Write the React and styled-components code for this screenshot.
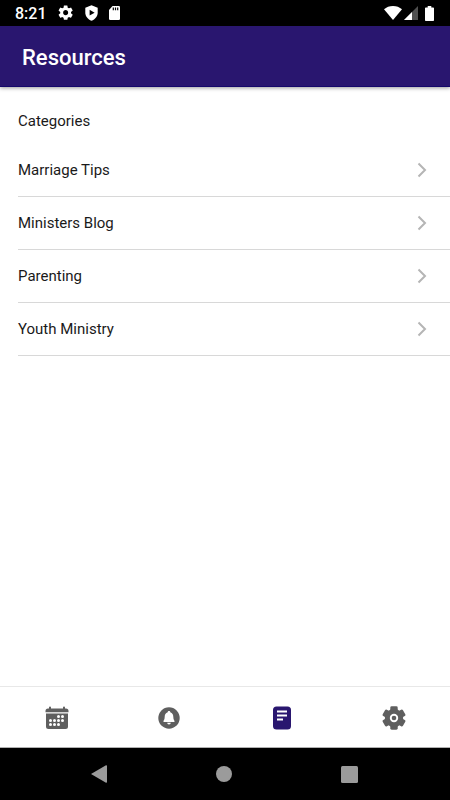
import React from "react";

import styled, { createGlobalStyle } from "styled-components";

const GlobalStyle = createGlobalStyle`
  * {
    box-sizing: border-box;
  }
  body {
    margin: 0;
    background: #ffffff;
    font-family: Roboto, "Liberation Sans", sans-serif;
  }
`;

const StyledScreen = styled.div`
  display: flex;
  flex-direction: column;
  min-height: 100vh;
`;

const StyledStatusBar = styled.div`
  display: flex;
  align-items: center;
  justify-content: space-between;
  height: 26px;
  padding: 0 16px 0 15px;
  background: #000000;
  color: #ffffff;
`;

const StyledStatusGroup = styled.div`
  display: flex;
  align-items: center;
  gap: ${(props) => props.$gap};

  svg {
    display: block;
  }
`;

const StyledClock = styled.span`
  padding-top: 2px;
  font-size: 16px;
  font-weight: 500;
  line-height: 24px;
`;

const StyledHeader = styled.header`
  display: flex;
  align-items: center;
  height: 61px;
  padding: 2px 22px 0;
  background: #29166f;
  border-bottom: 1px solid #15086b;
  box-shadow: 0 1px 4px rgba(0, 0, 0, 0.4);
`;

const StyledTitle = styled.h1`
  margin: 0;
  font-size: 22px;
  font-weight: 500;
  color: #ffffff;
`;

const StyledContent = styled.main`
  flex: 1;
  padding-left: 18px;
`;

const StyledSectionTitle = styled.h2`
  margin: 0;
  padding-top: 24px;
  font-size: 15px;
  font-weight: 400;
  line-height: 20px;
  color: #1a1a1a;
`;

const StyledList = styled.ul`
  margin: 13px 0 0;
  padding: 0;
  list-style: none;
`;

const StyledRow = styled.a`
  display: flex;
  align-items: center;
  justify-content: space-between;
  height: 53px;
  padding-right: 23px;
  border-bottom: 1px solid #d8d8d8;
  font-size: 15px;
  line-height: 20px;
  color: #1a1a1a;
  text-decoration: none;
`;

const StyledTabBar = styled.nav`
  display: flex;
  height: 62px;
  padding: 1px 0 0 1px;
  border-top: 1px solid #e8e8e8;
  border-bottom: 1px solid #b0b0b0;
`;

const StyledTab = styled.button`
  display: flex;
  flex: 1;
  align-items: center;
  justify-content: center;
  padding: 0;
  border: 0;
  background: none;
  color: ${(props) => (props.$active ? "#29166f" : "#5f5f5f")};
`;

const StyledSystemBar = styled.div`
  display: flex;
  height: 52px;
  padding: 0 38px 0 36px;
  background: #000000;
`;

const StyledSystemButton = styled.button`
  display: flex;
  flex: 1;
  align-items: center;
  justify-content: center;
  padding: 0;
  border: 0;
  background: none;
  color: #9b9b9b;
`;

const StatusGearIcon = () => (
  <svg width="18" height="18" viewBox="0 0 25 25" fill="currentColor">
    <path d="M19.43 12.98c.04-.32.07-.64.07-.98s-.03-.66-.07-.98l2.11-1.65c.19-.15.24-.42.12-.64l-2-3.46c-.12-.22-.39-.3-.61-.22l-2.49 1c-.52-.4-1.08-.73-1.69-.98l-.38-2.65A.488.488 0 0 0 14 2h-4c-.25 0-.46.18-.49.42l-.38 2.65c-.61.25-1.17.59-1.69.98l-2.49-1c-.23-.09-.49 0-.61.22l-2 3.46c-.13.22-.07.49.12.64l2.11 1.65c-.04.32-.07.65-.07.98s.03.66.07.98l-2.11 1.65c-.19.15-.24.42-.12.64l2 3.46c.12.22.39.3.61.22l2.49-1c.52.4 1.08.73 1.69.98l.38 2.65c.03.24.24.42.49.42h4c.25 0 .46-.18.49-.42l.38-2.65c.61-.25 1.17-.59 1.69-.98l2.49 1c.23.09.49 0 .61-.22l2-3.46c.12-.22.07-.49-.12-.64l-2.11-1.65zM12 15.5c-1.93 0-3.5-1.57-3.5-3.5s1.57-3.5 3.5-3.5 3.5 1.57 3.5 3.5-1.57 3.5-3.5 3.5z" />
  </svg>
);

const ShieldIcon = () => (
  <svg width="13" height="16" viewBox="0 0 13 16">
    <path
      d="M6.500.3 12.700 2.800V7.500C12.700 11.300 10.100 14.400 6.500 15.700 2.900 14.400.3 11.300.3 7.500V2.800Z"
      fill="currentColor"
    />
    <path d="M4.600 4.800 9.600 7.700 4.600 10.600Z" fill="#000000" />
  </svg>
);

const SdCardIcon = () => (
  <svg width="12" height="14" viewBox="0 0 12 14">
    <path
      d="M4.500 0H10.800A1.200 1.200 0 0 1 12 1.200V12.800A1.200 1.200 0 0 1 10.800 14H2.200A1.200 1.200 0 0 1 1 12.800V4Z"
      fill="currentColor"
    />
    <path d="M5.300 1.500V4.300M7.500 1.500V4.300M9.700 1.500V4.300" stroke="#000000" strokeWidth="1.200" />
  </svg>
);

const WifiIcon = () => (
  <svg width="18" height="14" viewBox="0 0 18 14">
    <path d="M0 3.300C2.400 1.200 5.500 0 9 0S15.600 1.200 18 3.300L9 14Z" fill="currentColor" />
  </svg>
);

const SignalIcon = () => (
  <svg width="14" height="14" viewBox="0 0 14 14">
    <path d="M14 0V14H0Z" fill="#505050" />
    <path d="M8 6V14H0Z" fill="currentColor" />
  </svg>
);

const BatteryIcon = () => (
  <svg width="9" height="15" viewBox="0 0 9 15">
    <path
      d="M2.700 0H6.300V1.500H8.200Q9 1.500 9 2.300V14.200Q9 15 8.200 15H.8Q0 15 0 14.200V2.300Q0 1.500.8 1.500H2.700Z"
      fill="currentColor"
    />
  </svg>
);

const ChevronIcon = () => (
  <svg width="10" height="16" viewBox="0 0 10 16" fill="none">
    <path d="M1.500 1.500 8 8 1.500 14.500" stroke="#b5b5b5" strokeWidth="2" />
  </svg>
);

const CALENDAR_DOTS = [
  [13.5, 10.5],
  [17.5, 10.5],
  [5.5, 14.5],
  [9.5, 14.5],
  [13.5, 14.5],
  [17.5, 14.5],
  [5.5, 18.5],
  [9.5, 18.5],
  [13.5, 18.5],
];

const CalendarIcon = () => (
  <svg width="24" height="24" viewBox="0 0 24 24">
    <path
      d="M3 2.500H4V1.500A1 1 0 0 1 6 1.500V2.500H18V1.500A1 1 0 0 1 20 1.500V2.500H21A2.500 2.500 0 0 1 23.500 5V6.300H.5V5A2.500 2.500 0 0 1 3 2.500Z"
      fill="currentColor"
    />
    <path d="M1 7.500H23V20.500A2.500 2.500 0 0 1 20.500 23H3.500A2.500 2.500 0 0 1 1 20.500Z" fill="currentColor" />
    {CALENDAR_DOTS.map(([x, y]) => (
      <circle key={`${x}-${y}`} cx={x} cy={y} r="1.500" fill="#ffffff" />
    ))}
  </svg>
);

const BellIcon = () => (
  <svg width="22" height="22" viewBox="0 0 22 22">
    <circle cx="11" cy="11" r="10.700" fill="currentColor" />
    <path
      d="M11 4C11.800 4 12.300 4.500 12.300 5.200 14.400 5.800 15.300 7.600 15.300 9.700 15.300 12.500 16.300 13.100 16.600 14.200Q16.700 15 16 15H6Q5.300 15 5.400 14.200C5.700 13.100 6.700 12.500 6.700 9.700 6.700 7.600 7.600 5.800 9.700 5.200 9.700 4.500 10.200 4 11 4ZM9.200 15.800H12.800A1.800 1.600 0 0 1 9.200 15.800Z"
      fill="#ffffff"
    />
  </svg>
);

const DocumentIcon = () => (
  <svg width="18" height="24" viewBox="0 0 18 24">
    <rect y="0.500" width="18" height="23" rx="3.500" fill="currentColor" />
    <path d="M4 5.500H14M4 9.500H14M4 13.500H10" stroke="#ffffff" strokeWidth="1.800" />
  </svg>
);

const SettingsIcon = () => (
  <svg width="24" height="24" viewBox="0 0 24 24" fill="currentColor">
    {[0, 60, 120].map((angle) => (
      <rect
        key={angle}
        x="8.300"
        y="0.300"
        width="7.400"
        height="23.400"
        rx="1.400"
        transform={`rotate(${angle} 12 12)`}
      />
    ))}
    <circle cx="12" cy="12" r="9.200" />
    <circle cx="12" cy="12" r="4.200" fill="#ffffff" />
    <circle cx="12" cy="12" r="2.300" />
  </svg>
);

const BackIcon = () => (
  <svg width="16" height="18" viewBox="0 0 16 18" fill="currentColor">
    <path d="M0 9 15 .2Q16 0 16 1V17Q16 18 15 17.800Z" />
  </svg>
);

const HomeIcon = () => (
  <svg width="16" height="16" viewBox="0 0 16 16" fill="currentColor">
    <circle cx="8" cy="8" r="8" />
  </svg>
);

const OverviewIcon = () => (
  <svg width="17" height="17" viewBox="0 0 17 17" fill="currentColor">
    <rect width="17" height="17" rx="1.500" />
  </svg>
);

const categories = ["Marriage Tips", "Ministers Blog", "Parenting", "Youth Ministry"];

const tabs = [
  { name: "Calendar", Icon: CalendarIcon },
  { name: "Notifications", Icon: BellIcon },
  { name: "Resources", Icon: DocumentIcon },
  { name: "Settings", Icon: SettingsIcon },
];

const systemButtons = [
  { name: "Back", Icon: BackIcon },
  { name: "Home", Icon: HomeIcon },
  { name: "Overview", Icon: OverviewIcon },
];

const App = () => {
  return (
    <StyledScreen>
      <GlobalStyle />
      <StyledStatusBar>
        <StyledStatusGroup $gap="10px">
          <StyledClock>8:21</StyledClock>
          <StatusGearIcon />
          <ShieldIcon />
          <SdCardIcon />
        </StyledStatusGroup>
        <StyledStatusGroup $gap="7px">
          <StyledStatusGroup $gap="2px">
            <WifiIcon />
            <SignalIcon />
          </StyledStatusGroup>
          <BatteryIcon />
        </StyledStatusGroup>
      </StyledStatusBar>
      <StyledHeader>
        <StyledTitle>Resources</StyledTitle>
      </StyledHeader>
      <StyledContent>
        <StyledSectionTitle>Categories</StyledSectionTitle>
        <StyledList>
          {categories.map((category) => (
            <li key={category}>
              <StyledRow href="#">
                {category}
                <ChevronIcon />
              </StyledRow>
            </li>
          ))}
        </StyledList>
      </StyledContent>
      <StyledTabBar>
        {tabs.map(({ name, Icon }) => (
          <StyledTab key={name} aria-label={name} $active={name === "Resources"}>
            <Icon />
          </StyledTab>
        ))}
      </StyledTabBar>
      <StyledSystemBar>
        {systemButtons.map(({ name, Icon }) => (
          <StyledSystemButton key={name} aria-label={name}>
            <Icon />
          </StyledSystemButton>
        ))}
      </StyledSystemBar>
    </StyledScreen>
  );
};

export default App;
